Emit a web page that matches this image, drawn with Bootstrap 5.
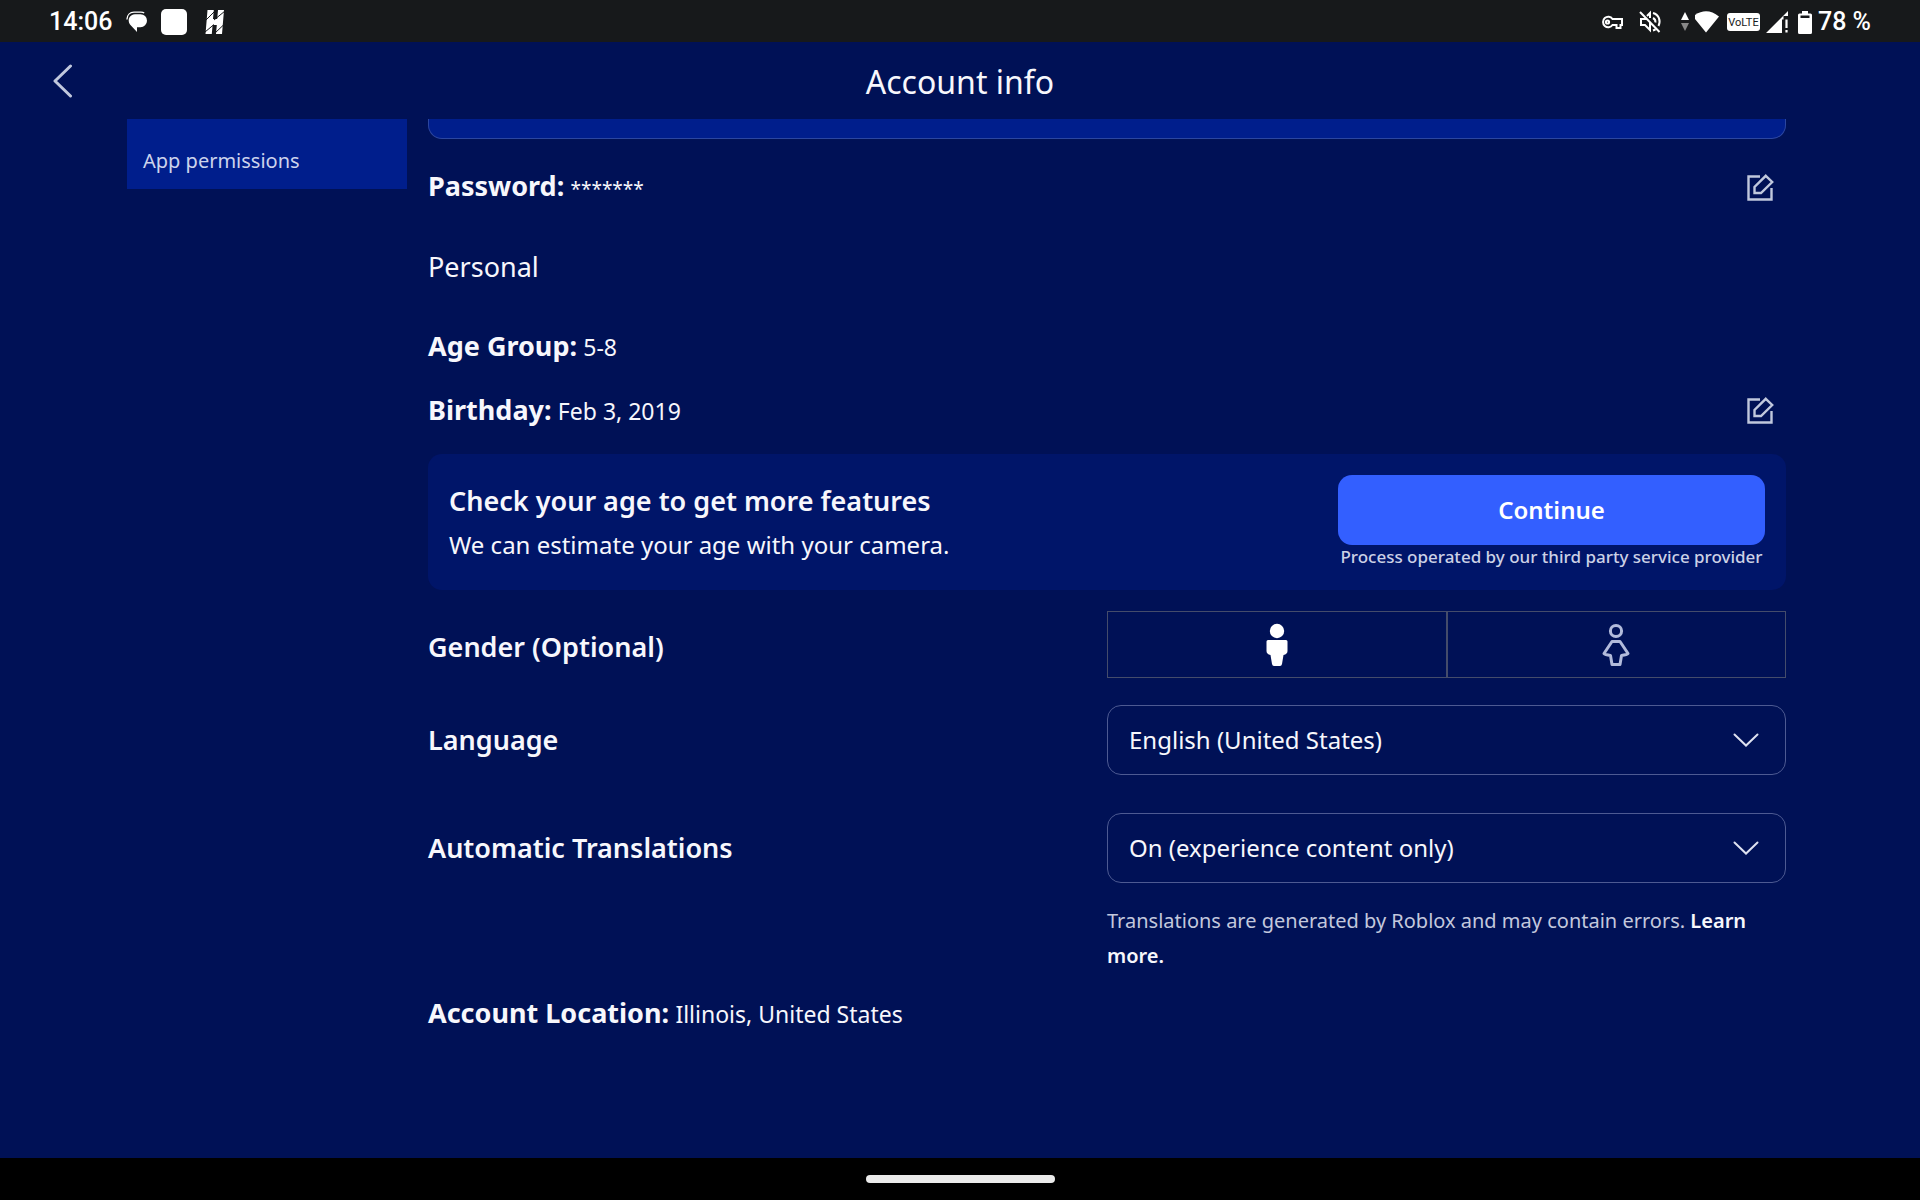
<!DOCTYPE html>
<html lang="en">
<head>
<meta charset="utf-8">
<meta name="viewport" content="width=device-width, initial-scale=1">
<title>Account info</title>
<link rel="stylesheet" href="https://cdn.jsdelivr.net/npm/bootstrap@5.3.0/dist/css/bootstrap.min.css">
<style>
  body { background: #001156; color: #f7f7fc; font-family: "Noto Sans", "Open Sans", sans-serif; font-size: 24px; line-height: 36px; }
  .status-bar { height: 42px; padding: 2px 49px 0; background: #17191b; color: #fff; font-family: Roboto, sans-serif; font-size: 25px; font-weight: 500; line-height: 40px; }
  .status-left { gap: 14px; }
  .status-right { gap: 6px; }
  .app-header { display: grid; grid-template-columns: 1fr auto 1fr; height: 77px; padding: 0 47px; }
  .app-header h1 { padding-top: 2px; font-size: 32px; font-weight: 400; line-height: 40px; }
  .back-btn { width: 32px; height: 48px; color: #c0c8dd; }
  .icon-btn { color: #c0c8dd; margin-right: 12px; line-height: 0; }
  .page-body { padding: 0 134px 0 127px; gap: 21px; }
  .side-menu { width: 280px; padding: 27px 16px 13px; background: #001e8c; }
  .side-menu a { color: #ccd3ec; font-size: 20px; line-height: 30px; }
  .field-end { height: 20px; background: #001e8c; border: 1px solid #2b46a0; border-top: 0; border-radius: 0 0 14px 14px; }
  .info-row { height: 64px; }
  .info-label, .age-title { font-size: 27px; font-weight: 600; }
  .info-key { font-size: 27px; font-weight: 700; }
  .info-value { font-size: 23px; }
  .info-mask { font-size: 19px; }
  .section-title { font-size: 27px; font-weight: 400; }
  .age-row { margin-top: 15px; }
  .age-card { margin-top: 12px; padding: 21px; border-radius: 14px; background: #001569; }
  .age-title { padding-top: 2px; line-height: 44px; }
  .age-action { width: 427px; }
  .btn-continue { height: 70px; border-radius: 14px; background: #335fff; color: #fff; font-size: 24px; font-weight: 600; }
  .btn-continue:hover { background: #4770ff; color: #fff; }
  .age-note { color: #ccd1e6; font-size: 17px; font-weight: 500; line-height: 24px; }
  .gender-row { margin-top: 21px; }
  .gender-opt { height: 67px; border: 1px solid #444c6b; color: #b2bbdb; cursor: pointer; }
  .btn-check:checked + .gender-opt { color: #fff; }
  .language-row { margin-top: 27px; }
  .translate-row { margin-top: 38px; }
  .choice { height: 70px; padding: 0 64px 0 21px; border: 1px solid #4d5a92; border-radius: 14px; color: #f7f7fc; font-size: 24px; background: transparent url("data:image/svg+xml,%3Csvg xmlns='http://www.w3.org/2000/svg' viewBox='0 0 26 14'%3E%3Cpath d='M1.5 1.5 13 12.5 24.5 1.5' fill='none' stroke='%23dde1f0' stroke-width='2' stroke-linecap='round'/%3E%3C/svg%3E") no-repeat right 26px center / 26px 14px; }
  .choice option { color: #001156; }
  .help-text { margin-top: 20px; color: #c3c8dd; font-size: 20px; line-height: 35px; }
  .help-text a { color: #f7f7fc; font-weight: 600; }
  .nav-strip { height: 42px; background: #000; }
  .nav-pill { width: 189px; height: 8px; border-radius: 4px; background: #ebebeb; }
</style>
</head>
<body class="vh-100 d-flex flex-column overflow-hidden">

<div class="status-bar d-flex align-items-center justify-content-between flex-shrink-0">
  <div class="status-left d-flex align-items-center">
    <span>14:06</span>
    <svg width="21" height="22" viewBox="0 0 21 22"><path d="M9 3.200h5.500a6.200 6.200 0 0 1 0 13H11V21L4 13.500C.8 8.500 4 3.200 9 3.200z" fill="#fff"/><path d="M.9 8.500C1 4 4 1.200 8 1.200h7q2 0 3.200.9" fill="none" stroke="#fff" stroke-width="1.300"/></svg>
    <svg width="26" height="26" viewBox="0 0 26 26"><rect width="26" height="26" rx="5" fill="#fff"/></svg>
    <svg class="ms-1" width="20" height="26" viewBox="0 0 20 26"><path d="M2.500 1h6.300L8 10h4.200L13 1h6l-2 24h-6l.8-9H7.600L6.800 25H.5z" fill="#fff"/><path d="M0 12 10 2M0 23 9 15.500M9 11 20 2M10 24l9-8.500" stroke="#17191b" stroke-width="1" fill="none"/></svg>
  </div>
  <div class="status-right d-flex align-items-center">
    <svg width="22" height="16" viewBox="0 0 22 16" fill="none" stroke="#fff" stroke-width="2"><path d="M11.500 5H21v6h-1.500v3h-4v-3h-4A5.200 5.200 0 1 1 11.500 5z"/><circle cx="6.500" cy="8" r="1.600"/></svg>
    <svg class="ms-2 me-2" width="26" height="24" viewBox="-2 0 26 24" fill="none" stroke="#fff" stroke-width="2"><path d="M1 2l19.500 20M8 9H2v6h4l5 5v-8M8 6l3-3v5M14 3c6 1.500 8 8 5.500 13M14 8c2 1 2.600 3 2.400 4.500M14 20.500l2.500-1"/></svg>
    <svg class="ms-1" width="8" height="20" viewBox="0 0 8 20"><path d="M4 0l4 8H0z" fill="#fff"/><path d="M4 19l4-8H0z" fill="#888"/></svg>
    <svg width="26" height="22" viewBox="2 0 26 22"><path d="M0 5.500Q13-5 26 5.500L13 21.500z" fill="#fff"/></svg>
    <svg width="33" height="18" viewBox="0 0 33 18"><rect width="33" height="18" rx="3" fill="#fff"/><text x="16.500" y="13" text-anchor="middle" font-family="Roboto, sans-serif" font-size="11" font-weight="400" fill="#17191b">VoLTE</text></svg>
    <svg width="22" height="22" viewBox="0 0 22 22"><path d="M0 22 22 0v5h-4.500v17z" fill="#fff"/><path d="M16 8.500h6V22h-6z" fill="#17191b"/><path d="M20.500 8.500v8.500M20.500 19v2.500" stroke="#fff" stroke-width="2.200"/></svg>
    <svg class="ms-1" width="14" height="23" viewBox="0 0 14 23"><path d="M4 0h6v2.500h2.500A1.500 1.500 0 0 1 14 4v17.500a1.500 1.500 0 0 1-1.500 1.500h-11A1.500 1.500 0 0 1 0 21.500V4a1.500 1.500 0 0 1 1.500-1.500H4z" fill="#fff"/><path d="M2.500 4.500h9V7h-9z" fill="#17191b"/></svg>
    <span>78 %</span>
  </div>
</div>

<header class="app-header align-items-center flex-shrink-0">
  <button type="button" class="back-btn btn border-0 p-0 d-flex align-items-center justify-content-center" aria-label="Back">
    <svg width="20" height="34" viewBox="0 0 20 34" fill="none" stroke="currentColor" stroke-width="3" stroke-linecap="round" stroke-linejoin="round"><path d="M17.500 2 2 17l15.500 15"/></svg>
  </button>
  <h1 class="m-0">Account info</h1>
</header>

<div class="page-body d-flex align-items-start flex-grow-1 overflow-hidden">
  <nav class="side-menu flex-shrink-0" aria-label="Settings">
    <a class="d-block text-decoration-none" href="#permissions">App permissions</a>
  </nav>

  <main class="flex-grow-1">
    <div class="field-end"></div>

    <div class="info-row mt-3 d-flex align-items-center justify-content-between">
      <div><span class="info-key">Password:</span> <span class="info-mask">*******</span></div>
      <button type="button" class="icon-btn btn border-0 p-0" aria-label="Edit password"><svg width="27" height="27" viewBox="0 0 27 27" fill="none" stroke="currentColor" stroke-width="2.400"><path d="M13 2.500H1.500v23h23V14"/><path d="M18.800 1.800 25.200 8 14 19H7.500v-6z"/></svg></button>
    </div>

    <h2 class="info-row section-title mt-3 mb-0 d-flex align-items-center">Personal</h2>

    <div class="info-row age-row d-flex align-items-center">
      <div><span class="info-key">Age Group:</span> <span class="info-value">5-8</span></div>
    </div>
    <div class="info-row d-flex align-items-center justify-content-between">
      <div><span class="info-key">Birthday:</span> <span class="info-value">Feb 3, 2019</span></div>
      <button type="button" class="icon-btn btn border-0 p-0" aria-label="Edit birthday"><svg width="27" height="27" viewBox="0 0 27 27" fill="none" stroke="currentColor" stroke-width="2.400"><path d="M13 2.500H1.500v23h23V14"/><path d="M18.800 1.800 25.200 8 14 19H7.500v-6z"/></svg></button>
    </div>

    <section class="age-card d-flex align-items-start justify-content-between">
      <div>
        <h3 class="age-title m-0 pt-1">Check your age to get more features</h3>
        <p class="m-0 pt-1">We can estimate your age with your camera.</p>
      </div>
      <div class="age-action text-center">
        <button type="button" class="btn btn-continue border-0 w-100">Continue</button>
        <div class="age-note text-nowrap">Process operated by our third party service provider</div>
      </div>
    </section>

    <div class="gender-row row g-0 align-items-center">
      <div class="col-6 info-label pt-1" id="gender-label">Gender (Optional)</div>
      <div class="col-6 d-flex" role="radiogroup" aria-labelledby="gender-label">
        <input class="btn-check" type="radio" name="gender" id="male" checked>
        <label class="gender-opt w-50 d-flex align-items-center justify-content-center" for="male" aria-label="Male">
          <svg width="24" height="44" viewBox="0 0 24 44" fill="currentColor"><circle cx="12" cy="8" r="7.200"/><path d="M3 17h18q1.500 0 1.500 1.500V28q0 3-4 4l-1.500 9q-.4 2-2 2H9q-1.600 0-2-2L5.500 32q-4-1-4-4v-9.500Q1.500 17 3 17z"/></svg>
        </label>
        <input class="btn-check" type="radio" name="gender" id="female">
        <label class="gender-opt w-50 d-flex align-items-center justify-content-center" for="female" aria-label="Female">
          <svg width="30" height="44" viewBox="0 0 30 44" fill="none" stroke="currentColor" stroke-width="3" stroke-linejoin="round"><circle cx="15" cy="8" r="5.600"/><path d="M11 18.500h8L27 30.500q-1 1.200-6.500 2L19 41.500h-8l-1.500-9q-5.500-.8-6.500-2z"/></svg>
        </label>
      </div>
    </div>

    <div class="language-row row g-0 align-items-center">
      <label class="col-6 info-label" for="language">Language</label>
      <div class="col-6"><select class="form-select choice" id="language"><option>English (United States)</option></select></div>
    </div>

    <div class="translate-row row g-0 align-items-center">
      <label class="col-6 info-label" for="translations">Automatic Translations</label>
      <div class="col-6"><select class="form-select choice" id="translations"><option>On (experience content only)</option></select></div>
    </div>
    <div class="row g-0 justify-content-end">
      <p class="col-6 help-text mb-2">Translations are generated by Roblox and may contain errors. <a class="text-decoration-none" href="#learn">Learn more.</a></p>
    </div>

    <div class="info-row d-flex align-items-center">
      <div><span class="info-key">Account Location:</span> <span class="info-value">Illinois, United States</span></div>
    </div>
  </main>
</div>

<footer class="nav-strip d-flex align-items-center justify-content-center flex-shrink-0">
  <div class="nav-pill"></div>
</footer>

<script src="https://cdn.jsdelivr.net/npm/bootstrap@5.3.0/dist/js/bootstrap.bundle.min.js"></script>
</body>
</html>
